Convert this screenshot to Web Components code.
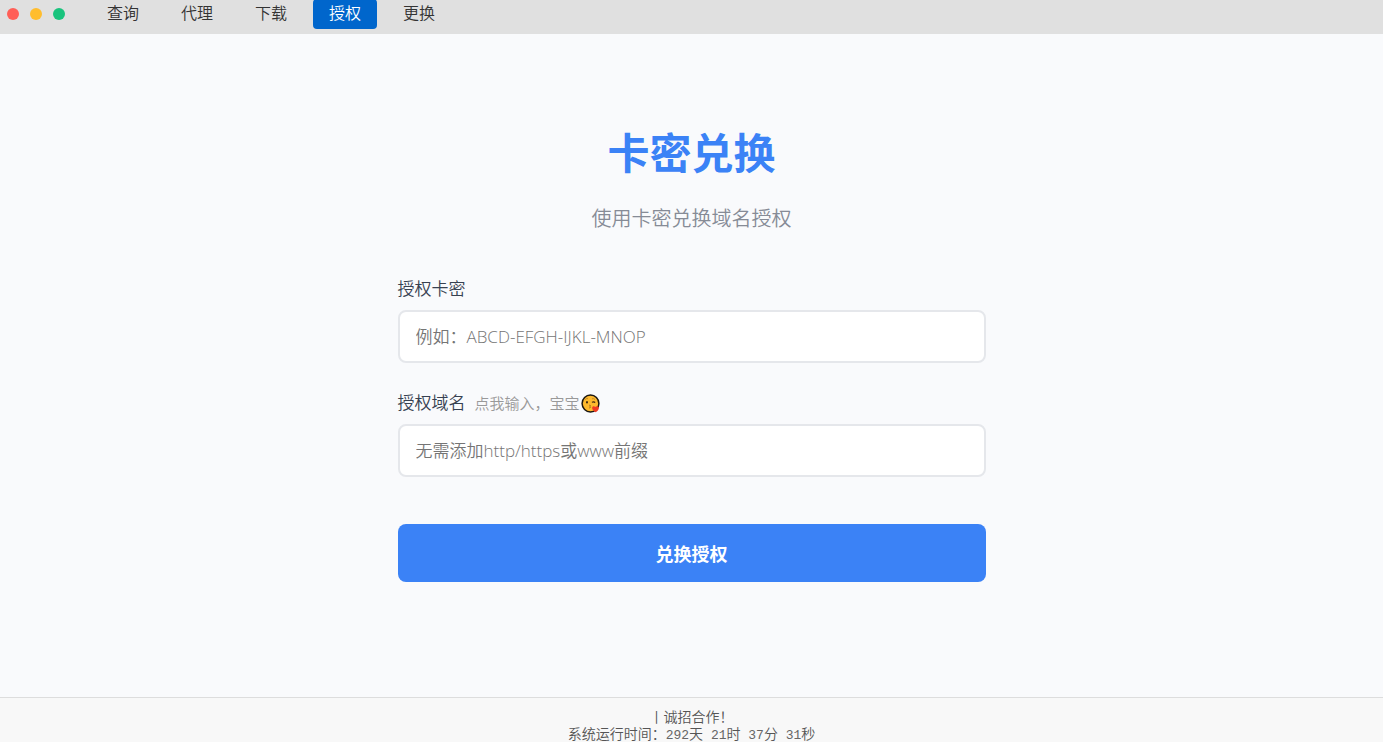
<!DOCTYPE html>
<html lang="zh-CN">
<head>
<meta charset="UTF-8">
<meta name="viewport" content="width=device-width, initial-scale=1.0">
<title>卡密兑换</title>
<style>
body {
  margin: 0;
  min-height: 100vh;
  display: flex;
  flex-direction: column;
  background-color: #f9fafc;
  font-family: "Open Sans", "Noto Sans CJK SC", sans-serif;
}

redeem-page {
  flex: 1;
}
</style>
</head>
<body>
<nav-bar>
  <nav-item href="#query">查询</nav-item>
  <nav-item href="#agent">代理</nav-item>
  <nav-item href="#download">下载</nav-item>
  <nav-item href="#license" active>授权</nav-item>
  <nav-item href="#replace">更换</nav-item>
</nav-bar>

<redeem-page>
  <span slot="title">卡密兑换</span>
  <span slot="subtitle">使用卡密兑换域名授权</span>
  <text-field label="授权卡密" placeholder="例如：ABCD-EFGH-IJKL-MNOP"></text-field>
  <text-field label="授权域名" placeholder="无需添加http/https或www前缀">
    <field-hint slot="hint">点我输入，宝宝</field-hint>
  </text-field>
  <submit-button slot="action">兑换授权</submit-button>
</redeem-page>

<site-footer>丨诚招合作！</site-footer>

<script>
// Shared helper: clone the markup into an open shadow root
function render(host, html) {
  const template = document.createElement('template');
  template.innerHTML = html;
  host.attachShadow({ mode: 'open' }).appendChild(template.content.cloneNode(true));
}

class NavBar extends HTMLElement {
  constructor() {
    super();
    render(this, `
<style>
:host {
  display: flex;
  flex-shrink: 0;
  height: 34px;
  padding-left: 7px;
  background-color: #e0e0e0;
  overflow: hidden;
}

.dots {
  display: flex;
  gap: 11px;
  margin: 8px 26px 0 0;
}

.dots span {
  width: 12px;
  height: 12px;
  border-radius: 50%;
}

.red { background-color: #ff5f57; }
.yellow { background-color: #ffbd2e; }
.green { background-color: #19c37d; }

nav {
  display: flex;
  align-items: flex-start;
  gap: 10px;
}
</style>
<div class="dots">
  <span class="red"></span>
  <span class="yellow"></span>
  <span class="green"></span>
</div>
<nav><slot></slot></nav>
`);
  }
}

class NavItem extends HTMLElement {
  constructor() {
    super();
    render(this, `
<style>
:host {
  display: block;
  margin-top: -1px;
}

a {
  display: block;
  padding: 0 16px 2px;
  line-height: 28px;
  border-radius: 4px;
  font-size: 16px;
  font-weight: 350;
  color: #333;
  text-decoration: none;
}

:host([active]) a {
  background-color: #0066cc;
  color: white;
}
</style>
<a><slot></slot></a>
`);
  }

  connectedCallback() {
    this.shadowRoot.querySelector('a').href = this.getAttribute('href');
  }
}

class RedeemPage extends HTMLElement {
  constructor() {
    super();
    render(this, `
<style>
:host {
  display: block;
  padding: 89px 20px 40px;
}

main {
  max-width: 588px;
  margin: 0 auto;
}

h1 {
  margin: 0 0 22px;
  font-size: 42px;
  line-height: 60px;
  font-weight: 700;
  color: #3b82f6;
  text-align: center;
}

p {
  margin: 0 0 44px;
  font-size: 20px;
  line-height: 28px;
  font-weight: 350;
  color: #868b96;
  text-align: center;
}

.fields {
  display: flex;
  flex-direction: column;
  gap: 28px;
  margin-bottom: 47px;
}
</style>
<main>
  <h1><slot name="title"></slot></h1>
  <p><slot name="subtitle"></slot></p>
  <div class="fields"><slot></slot></div>
  <slot name="action"></slot>
</main>
`);
  }
}

class TextField extends HTMLElement {
  constructor() {
    super();
    render(this, `
<style>
:host {
  display: block;
}

.head {
  display: flex;
  align-items: center;
  gap: 9px;
  margin-bottom: 9px;
  line-height: 24px;
}

label {
  font-size: 17px;
  font-weight: 350;
  color: #374151;
}

input {
  display: block;
  box-sizing: border-box;
  width: 100%;
  height: 53px;
  padding: 0 16px;
  border: 2px solid #e5e7eb;
  border-radius: 8px;
  background-color: white;
  font-family: inherit;
  font-size: 17px;
  font-weight: 350;
  color: #333;
}

input::placeholder {
  color: #757575;
}
</style>
<div class="head">
  <label for="field"></label>
  <slot name="hint"></slot>
</div>
<input id="field" type="text">
`);
  }

  connectedCallback() {
    this.shadowRoot.querySelector('label').textContent = this.getAttribute('label');
    this.shadowRoot.querySelector('input').placeholder = this.getAttribute('placeholder');
  }
}

class FieldHint extends HTMLElement {
  constructor() {
    super();
    render(this, `
<style>
:host {
  display: flex;
  align-items: center;
  gap: 1px;
  font-size: 15px;
  font-weight: 350;
  color: #999;
}

svg {
  width: 19px;
  height: 19px;
}
</style>
<slot></slot>
<svg viewBox="0 0 19 19" aria-hidden="true">
  <circle cx="9.5" cy="9.5" r="8.4" fill="#fdb92e" stroke="#1c1710" stroke-width="1.5"/>
  <path d="M4.2 5.6q1.2-1.5 2.8-1M11 4.8q1.8-.6 3 .7" fill="none" stroke="#a87420" stroke-width=".7"/>
  <ellipse cx="6" cy="8.2" rx=".9" ry="1.3" fill="#3a2410"/>
  <path d="M11 8.4q1.5-1.2 3.2 0" fill="none" stroke="#3a2410" stroke-width="1.2"/>
  <path d="M8.2 11.1q2 .2.8 1.4 1.4 1-.9 1.6" fill="none" stroke="#8c5a1a" stroke-width=".8"/>
  <path d="M14.600 18.200c-2-1-3.600-2.600-3.500-4.400 0-1.700 2.200-2.300 3.100-.8 1.200-1.500 3.700-1 3.700 1 0 1.700-1.600 3.300-3.300 4.200z" fill="#f03a24"/>
</svg>
`);
  }
}

class SubmitButton extends HTMLElement {
  constructor() {
    super();
    render(this, `
<style>
:host {
  display: block;
}

button {
  display: block;
  width: 100%;
  height: 58px;
  border: none;
  border-radius: 8px;
  background-color: #3b82f6;
  color: white;
  font-family: inherit;
  font-size: 18px;
  font-weight: 700;
  cursor: pointer;
}
</style>
<button type="button"><slot></slot></button>
`);
  }
}

class SiteFooter extends HTMLElement {
  constructor() {
    super();
    render(this, `
<style>
:host {
  display: block;
  padding-top: 10px;
  border-top: 1px solid #ddd;
  background-color: #f8f8f8;
  font-size: 14px;
  line-height: 17px;
  font-weight: 350;
  color: #555;
  text-align: center;
}

/* Keep the monospace digits from stretching the line */
.num {
  font-family: "Liberation Mono", monospace;
  font-size: 13px;
  line-height: 1px;
  white-space: pre;
  color: #666;
}
</style>
<div><slot></slot></div>
<div>系统运行时间：<span class="num">292</span>天<span class="num"> 21</span>时<span class="num"> 37</span>分<span class="num"> 31</span>秒</div>
`);
  }
}

customElements.define('nav-bar', NavBar);
customElements.define('nav-item', NavItem);
customElements.define('redeem-page', RedeemPage);
customElements.define('text-field', TextField);
customElements.define('field-hint', FieldHint);
customElements.define('submit-button', SubmitButton);
customElements.define('site-footer', SiteFooter);
</script>
</body>
</html>
